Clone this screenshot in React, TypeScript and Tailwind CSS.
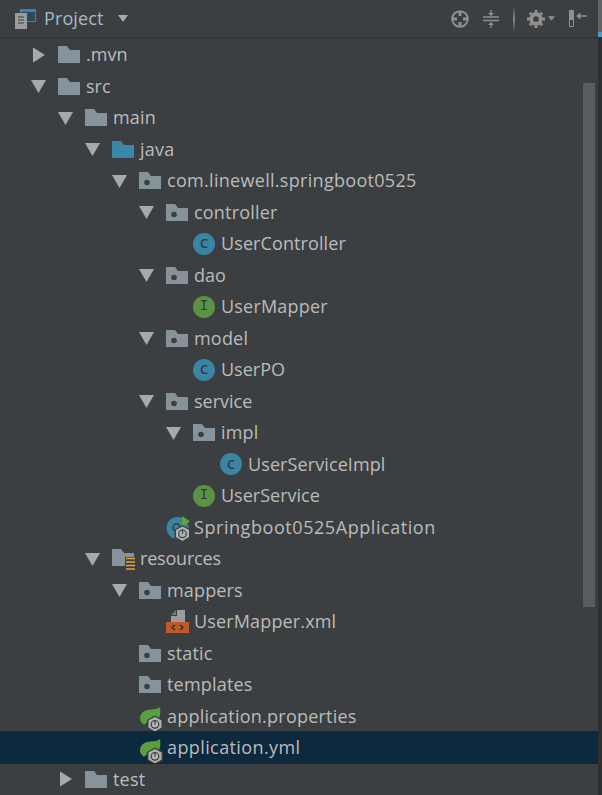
import React from "react";

type Kind = "folder" | "pkg" | "src" | "res" | "class" | "iface" | "app" | "xml" | "spring";
type Row = { name: string; depth: number; kind: Kind; arrow?: "open" | "closed"; selected?: boolean; track?: string };

const rows: Row[] = [
  { name: ".mvn", depth: 0, kind: "folder", arrow: "closed" },
  { name: "src", depth: 0, kind: "folder", arrow: "open" },
  { name: "main", depth: 1, kind: "folder", arrow: "open", track: "tracking-[0.2px]" },
  { name: "java", depth: 2, kind: "src", arrow: "open", track: "tracking-[0.2px]" },
  { name: "com.linewell.springboot0525", depth: 3, kind: "pkg", arrow: "open", track: "tracking-[0.3px]" },
  { name: "controller", depth: 4, kind: "pkg", arrow: "open", track: "tracking-[0.2px]" },
  { name: "UserController", depth: 5, kind: "class", track: "tracking-[0.1px]" },
  { name: "dao", depth: 4, kind: "pkg", arrow: "open" },
  { name: "UserMapper", depth: 5, kind: "iface", track: "tracking-[0.2px]" },
  { name: "model", depth: 4, kind: "pkg", arrow: "open", track: "tracking-[0.2px]" },
  { name: "UserPO", depth: 5, kind: "class" },
  { name: "service", depth: 4, kind: "pkg", arrow: "open" },
  { name: "impl", depth: 5, kind: "pkg", arrow: "open", track: "tracking-[0.2px]" },
  { name: "UserServiceImpl", depth: 6, kind: "class", track: "tracking-[0.1px]" },
  { name: "UserService", depth: 5, kind: "iface" },
  { name: "Springboot0525Application", depth: 4, kind: "app", track: "tracking-[0.56px]" },
  { name: "resources", depth: 2, kind: "res", arrow: "open", track: "tracking-[-0.2px]" },
  { name: "mappers", depth: 3, kind: "pkg", arrow: "open", track: "tracking-[0.15px]" },
  { name: "UserMapper.xml", depth: 4, kind: "xml", track: "tracking-[0.15px]" },
  { name: "static", depth: 3, kind: "pkg", track: "tracking-[0.15px]" },
  { name: "templates", depth: 3, kind: "pkg", track: "tracking-[0.2px]" },
  { name: "application.properties", depth: 3, kind: "spring", track: "tracking-[0.23px]" },
  { name: "application.yml", depth: 3, kind: "spring", selected: true, track: "tracking-[0.4px]" },
  { name: "test", depth: 1, kind: "folder", arrow: "closed", track: "tracking-[0.2px]" },
];

const Arrow = ({ dir }: { dir: "open" | "closed" }) => (
  <svg width="16" height="16" viewBox="0 0 16 16">
    {dir === "open" ? <path d="M0 2h15l-7.5 13z" fill="#a9a9a9" /> : <path d="M2 .5l12 7.5-12 7.5z" fill="#a9a9a9" />}
  </svg>
);

const Folder = ({ color = "#87939a", dot = false }: { color?: string; dot?: boolean }) => (
  <svg width="22" height="19" viewBox="0 0 22 19">
    <path d="M0 1h9l3 4h10v13H0z" fill={color} />
    {dot && <circle cx="8" cy="11.5" r="2.8" fill="#3c3f41" />}
  </svg>
);

// spring boot badge, hexagon with power symbol
const Boot = () => (
  <g>
    <path d="M11.5 7.5l8 4.5v8.5l-8 4.500-8-4.500V12z" fill="#3c3f41" />
    <path d="M11.5 9l6.500 3.600v7L11.500 23.400 5 19.600v-7z" fill="#afb1b3" />
    <circle cx="11.5" cy="16.3" r="3.8" fill="none" stroke="#3c3f41" strokeWidth="1.2" />
    <path d="M11.5 12v4.400" stroke="#3c3f41" strokeWidth="1.2" />
  </g>
);

const Letter = ({ bg, ch, mono }: { bg: string; ch: string; mono?: boolean }) => (
  <div
    className={`flex h-[22px] w-[22px] items-center justify-center rounded-full text-[#2f3b40] ${bg} ${
      mono ? "font-['Liberation_Mono',monospace] text-[14px]" : "text-[13px] font-semibold"
    }`}
  >
    {ch}
  </div>
);

const Icon = ({ kind }: { kind: Kind }) => {
  if (kind === "folder") return <Folder />;
  if (kind === "pkg") return <Folder dot />;
  if (kind === "src") return <Folder color="#3b87a8" />;
  if (kind === "res")
    return (
      <svg width="24" height="22" viewBox="0 0 24 22">
        <path d="M0 1h9l3 4h10v13H0z" fill="#87939a" />
        <rect x="13" y="9" width="11" height="13" fill="#3c3f41" />
        <path d="M14 10.500h9M14 14h9M14 17.500h9M14 21h9" stroke="#e0a63c" strokeWidth="1.6" />
      </svg>
    );
  if (kind === "class") return <Letter bg="bg-[#3a85a4]" ch="C" />;
  if (kind === "iface") return <Letter bg="bg-[#5b9244]" ch="I" mono />;
  if (kind === "app")
    return (
      <svg width="24" height="28" viewBox="0 0 24 28">
        <circle cx="11.5" cy="15" r="11" fill="#3a85a4" />
        <circle cx="10.500" cy="14.500" r="3.600" fill="none" stroke="#3c3f41" strokeWidth="1.6" />
        <path d="M16 3l8 5.500-8 5.500z" fill="#59a83c" />
        <g transform="translate(5 4.500)"><Boot /></g>
      </svg>
    );
  if (kind === "xml")
    return (
      <svg width="23" height="23" viewBox="0 0 23 23">
        <path d="M11 0h8v12H5V6h6z" fill="#9a9c9e" />
        <path d="M5 5l5-5v5z" fill="#77797b" />
        <rect x="0" y="12" width="23" height="11" fill="#bf5a28" />
        <path d="M9 15l-3 2.500 3 2.500M14 15l3 2.500-3 2.500" stroke="#2f2f2f" strokeWidth="1.4" fill="none" />
      </svg>
    );
  return (
    <svg width="24" height="30" viewBox="0 0 24 30">
      <path d="M21 6c1 6 0 11-3 15H8l-3 3-2-2C0 19 .5 14 4 11c5-4 12-1 17-5z" fill="#5a9f3e" />
      <g transform="translate(4.500 7)"><Boot /></g>
    </svg>
  );
};

const TreeRow = ({ row }: { row: Row }) => (
  <div
    className={`relative flex h-[31.5px] items-center whitespace-nowrap ${row.selected ? "bg-[#0d293e] shadow-[0_-1px_0_#0d293e]" : ""}`}
    style={{ paddingLeft: 31 + row.depth * 27 }}
  >
    <div className="flex w-[27px] shrink-0 items-center">{row.arrow && <Arrow dir={row.arrow} />}</div>
    <div className="flex w-[28px] shrink-0 items-center">
      <Icon kind={row.kind} />
    </div>
    <span className={row.track}>{row.name}</span>
  </div>
);

export default function App() {
  return (
    <div className="relative h-[795px] w-[602px] overflow-hidden bg-[#3c3f41] font-['Open_Sans',sans-serif] text-[18px] text-[#bbbbbb]">
      {/* toolbar */}
      <div className="flex h-[38px] items-center border-b border-[#323232] pr-[15px] pl-[15px]">
        <svg width="22" height="20" viewBox="0 0 22 20">
          <rect x="5" y="0" width="16" height="13" fill="#3b86a8" />
          <rect x="6" y="3" width="14" height="9" fill="#2a4a5c" />
          <rect x="0" y="4" width="12" height="16" fill="#9a9c9e" />
          <path d="M3 8h6M3 11h6M3 14h6" stroke="#3c3f41" strokeWidth="1.2" />
        </svg>
        <span className="ml-[7px] tracking-[0.1px] text-[#a9b7c6]">Project</span>
        <svg className="ml-[14px]" width="12" height="7" viewBox="0 0 12 7">
          <path d="M1 0h10L6 7z" fill="#a9a9a9" />
        </svg>
        <div className="ml-auto flex items-center">
          <svg width="18" height="18" viewBox="0 0 18 18">
            <circle cx="9" cy="9" r="7.800" fill="none" stroke="#8f8f8f" strokeWidth="2" />
            <path d="M9 1v5M9 12v5M1 9h5M12 9h5" stroke="#8f8f8f" strokeWidth="3" />
          </svg>
          <svg className="ml-[14px]" width="16" height="20" viewBox="0 0 16 20">
            <path d="M0 8h16M0 11.500h16M8 1v4M8 15v4" stroke="#8f8f8f" strokeWidth="1.3" />
            <path d="M5 4h6L8 7zM5 16h6l-3-3z" fill="#8f8f8f" />
          </svg>
          <div className="mr-[12px] ml-[14px] h-[26px] w-[2px] bg-gradient-to-b from-transparent via-[#8a8a8a] to-transparent" />
          <svg width="18" height="18" viewBox="0 0 19 19">
            <circle cx="9.500" cy="9.500" r="5" fill="none" stroke="#8f8f8f" strokeWidth="4" />
            <path d="M9.500 0v4M9.500 15v4M0 9.500h4M15 9.500h4M3 3l3 3M13 13l3 3M3 16l3-3M13 6l3-3" stroke="#8f8f8f" strokeWidth="3" />
          </svg>
          <svg className="ml-[3px]" width="7" height="5" viewBox="0 0 8 5">
            <path d="M0 0h8L4 5z" fill="#8f8f8f" />
          </svg>
          <svg className="ml-[14px]" width="18" height="17" viewBox="0 0 18 17">
            <path d="M.5.5h4v16h-4z" fill="none" stroke="#8f8f8f" />
            <rect x="0" y="0" width="5" height="10" fill="#8f8f8f" />
            <path d="M9 6h9" stroke="#8f8f8f" strokeWidth="1.5" />
            <path d="M11.500 2.500L7 6l4.500 3.500z" fill="#8f8f8f" />
          </svg>
        </div>
      </div>

      {/* tree */}
      <div className="pt-px">
        {rows.map((row) => (
          <TreeRow key={row.name + row.depth} row={row} />
        ))}
      </div>

      {/* scrollbar thumb */}
      <div className="absolute top-[83px] left-[583px] h-[524px] w-[12px] bg-[#5a5c5e]" />
      {/* window edge */}
      <div className="absolute top-0 right-0 h-full w-[4px] bg-[#2d2f31]" />
      <div className="absolute top-0 right-0 h-[32px] w-[4px] bg-[#5f6466]" />
      <div className="absolute top-[32px] right-0 h-[5px] w-[4px] bg-[#4a9ebd]" />
    </div>
  );
}
